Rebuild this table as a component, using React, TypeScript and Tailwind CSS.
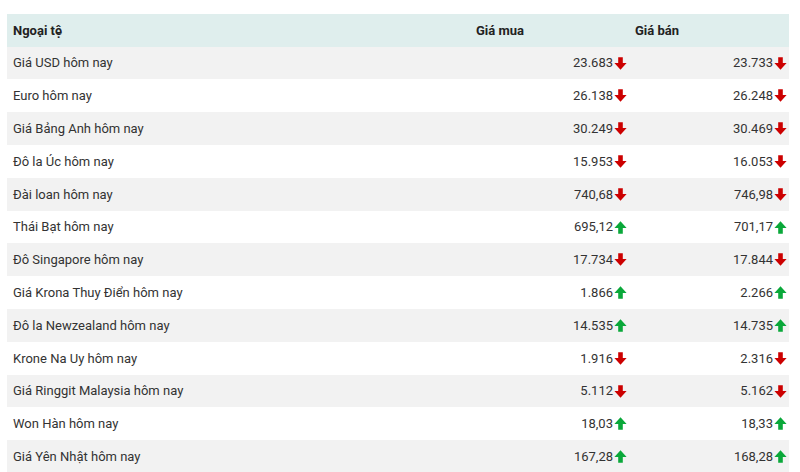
import React from "react";

type Rate = { name: string; buy: string; buyUp: boolean; sell: string; sellUp: boolean };

const RATES: Rate[] = [
  { name: "Giá USD hôm nay", buy: "23.683", buyUp: false, sell: "23.733", sellUp: false },
  { name: "Euro hôm nay", buy: "26.138", buyUp: false, sell: "26.248", sellUp: false },
  { name: "Giá Bảng Anh hôm nay", buy: "30.249", buyUp: false, sell: "30.469", sellUp: false },
  { name: "Đô la Úc hôm nay", buy: "15.953", buyUp: false, sell: "16.053", sellUp: false },
  { name: "Đài loan hôm nay", buy: "740,68", buyUp: false, sell: "746,98", sellUp: false },
  { name: "Thái Bạt hôm nay", buy: "695,12", buyUp: true, sell: "701,17", sellUp: true },
  { name: "Đô Singapore hôm nay", buy: "17.734", buyUp: false, sell: "17.844", sellUp: false },
  { name: "Giá Krona Thuy Điển hôm nay", buy: "1.866", buyUp: true, sell: "2.266", sellUp: true },
  { name: "Đô la Newzealand hôm nay", buy: "14.535", buyUp: true, sell: "14.735", sellUp: true },
  { name: "Krone Na Uy hôm nay", buy: "1.916", buyUp: false, sell: "2.316", sellUp: false },
  { name: "Giá Ringgit Malaysia hôm nay", buy: "5.112", buyUp: false, sell: "5.162", sellUp: false },
  { name: "Won Hàn hôm nay", buy: "18,03", buyUp: true, sell: "18,33", sellUp: true },
  { name: "Giá Yên Nhật hôm nay", buy: "167,28", buyUp: true, sell: "168,28", sellUp: true },
];

function Arrow({ up }: { up: boolean }) {
  return (
    <svg width="13" height="13" viewBox="0 0 13 13" className={up ? "text-[#0aa83a]" : "text-[#cc0000]"}>
      <path
        fill="currentColor"
        transform={up ? "rotate(180 6.5 6.5)" : undefined}
        d="M4.2 0.3 H8.8 V6 H12.6 L6.5 12.8 L0.4 6 H4.2 Z"
      />
    </svg>
  );
}

function Price({ value, up }: { value: string; up: boolean }) {
  return (
    <div className="flex items-center justify-end gap-[1px] pr-[2px]">
      <span>{value}</span>
      <Arrow up={up} />
    </div>
  );
}

export default function App() {
  return (
    <main className="min-h-screen bg-white pt-[14px] px-[7px] font-['Roboto',sans-serif] text-[13px] text-[#333]">
      <div className="w-[782px]">
        <div className="grid grid-cols-[463px_159px_160px] h-[32.7px] items-center bg-[#dfeeed] font-bold text-[#222]">
          <div className="pl-[6px]">Ngoại tệ</div>
          <div className="pl-[6px]">Giá mua</div>
          <div className="pl-[6px]">Giá bán</div>
        </div>
        {RATES.map((r, i) => (
          <div
            key={r.name}
            className={
              "grid grid-cols-[463px_159px_160px] h-[32.8px] items-center " +
              (i % 2 === 0 ? "bg-[#f2f2f2]" : "bg-white")
            }
          >
            <div className="pl-[6px]">{r.name}</div>
            <Price value={r.buy} up={r.buyUp} />
            <Price value={r.sell} up={r.sellUp} />
          </div>
        ))}
      </div>
    </main>
  );
}
